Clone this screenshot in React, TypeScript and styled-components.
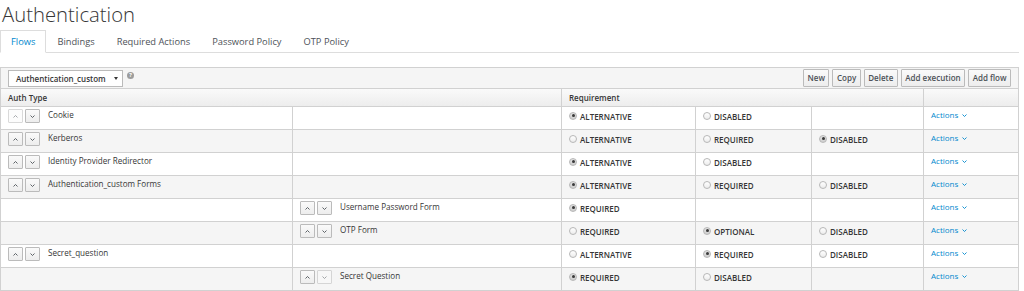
import React from "react";
import styled, { createGlobalStyle, css } from "styled-components";

const Global = createGlobalStyle`
  html, body { margin: 0; padding: 0; background: #fff; }
  body { font-family: "Open Sans", "Noto Sans", sans-serif; color: #363636; }
  * { box-sizing: border-box; }
`;

const Page = styled.div`
  width: 1019px;
`;

const Title = styled.h1`
  margin: 0;
  padding-left: 2px;
  font-size: 20.3px;
  font-weight: 300;
  line-height: 28px;
  color: #363636;
`;

const Tabs = styled.ul`
  display: flex;
  list-style: none;
  margin: 2px 0 0;
  padding: 0;
  border-bottom: 1px solid #ddd;
`;

const Tab = styled.li<{ $active?: boolean }>`
  height: 23px;
  margin-bottom: -1px;
  padding: 0 10px;
  font-size: 9.3px;
  line-height: 22px;
  color: #4d5258;
  border: 1px solid transparent;
  ${(p) =>
    p.$active &&
    css`
      color: #0088ce;
      border-color: #ddd;
      border-bottom-color: #fff;
      background: #fff;
    `}
`;

const Toolbar = styled.div`
  display: flex;
  align-items: flex-end;
  height: 22px;
  margin-top: 14px;
  padding: 0 7px 1px 7px;
  border: 1px solid #d1d1d1;
  background: #f5f5f5;
`;

const Select = styled.div`
  display: flex;
  align-items: center;
  justify-content: space-between;
  width: 115px;
  height: 17px;
  padding: 0 4px 0 7px;
  border: 1px solid #bbb;
  background: #fff;
  font-size: 8px;
  font-weight: 600;
  color: #363636;
`;

const Caret = styled.span`
  width: 0;
  height: 0;
  border-left: 2px solid transparent;
  border-right: 2px solid transparent;
  border-top: 3px solid #363636;
`;

const Help = styled.span`
  align-self: flex-start;
  margin: 4px 0 0 4px;
  width: 7px;
  height: 7px;
  border-radius: 50%;
  background: #9c9c9c;
  color: #fff;
  font-size: 5.5px;
  font-weight: 700;
  line-height: 7px;
  text-align: center;
`;

const ButtonGroup = styled.div`
  display: flex;
  gap: 3px;
  margin-left: auto;
`;

const ToolButton = styled.button`
  height: 18px;
  padding: 0 3.5px;
  border: 1px solid #bbb;
  border-radius: 1px;
  background: linear-gradient(#fafafa, #ededed);
  font-family: inherit;
  font-size: 8px;
  font-weight: 600;
  color: #4d5258;
  line-height: 16px;
`;

const Grid = styled.div`
  display: grid;
  grid-template-columns: 292px 269px 134px 116px 112px 95px;
  border-right: 1px solid #d1d1d1;
`;

const HeadRow = styled(Grid)`
  height: 18px;
  border-bottom: 1px solid #d1d1d1;
  background: linear-gradient(#fafafa, #ededed);
`;

const HeadCell = styled.div<{ $span: number }>`
  grid-column: span ${(p) => p.$span};
  display: flex;
  align-items: center;
  padding: 0 7px;
  border-left: 1px solid #d1d1d1;
  font-size: 8px;
  font-weight: 600;
  color: #363636;
`;

const BodyRow = styled(Grid)<{ $striped: boolean }>`
  height: 23px;
  border-bottom: 1px solid #d1d1d1;
  background: ${(p) => (p.$striped ? "#f5f5f5" : "#fff")};
`;

const Cell = styled.div`
  display: flex;
  align-items: flex-start;
  padding: 2px 7px 0;
  border-left: 1px solid #d1d1d1;
  min-width: 0;
`;

const MoveButtons = styled.div`
  display: flex;
  gap: 2px;
  margin-right: 8px;
`;

const MoveButton = styled.span<{ $disabled?: boolean }>`
  display: flex;
  align-items: center;
  justify-content: center;
  width: 15px;
  height: 14px;
  border: 1px solid #bbb;
  border-radius: 1px;
  background: linear-gradient(#fafafa, #ededed);
  color: #4d5258;
  ${(p) =>
    p.$disabled &&
    css`
      opacity: 0.55;
      background: #fafafa;
    `}
`;

const Name = styled.span`
  font-size: 8.1px;
  line-height: 12px;
  color: #363636;
  white-space: nowrap;
`;

const Option = styled.label`
  display: flex;
  align-items: center;
  gap: 3px;
  margin-top: 2px;
  font-size: 8px;
  font-weight: 600;
  line-height: 11px;
  color: #363636;
  white-space: nowrap;
`;

const Radio = styled.span<{ $checked?: boolean }>`
  position: relative;
  flex: none;
  width: 8px;
  height: 8px;
  margin-top: -2px;
  border-radius: 50%;
  border: 1px solid #b7b7b7;
  background: ${(p) => (p.$checked ? "linear-gradient(#e2e2e2, #cfcfcf)" : "linear-gradient(#fff, #ececec)")};
  ${(p) =>
    p.$checked &&
    css`
      &::after {
        content: "";
        position: absolute;
        left: 1.5px;
        top: 1.5px;
        width: 3px;
        height: 3px;
        border-radius: 50%;
        background: #3a3a3a;
      }
    `}
`;

const ActionsLink = styled.a`
  display: flex;
  align-items: center;
  gap: 4px;
  font-size: 8px;
  line-height: 12px;
  color: #0088ce;
  text-decoration: none;
`;

const Chevron = ({ up }: { up?: boolean }) => (
  <svg width="5" height="3" viewBox="0 0 5 3" style={up ? { transform: "rotate(180deg)" } : undefined}>
    <path d="M0.5 0.5 L2.5 2.5 L4.5 0.5" fill="none" stroke="currentColor" strokeWidth="0.9" />
  </svg>
);

type Opt = { label: string; checked?: boolean };
type Row = {
  name: string;
  nested?: boolean;
  upDisabled?: boolean;
  downDisabled?: boolean;
  options: Opt[];
};

const rows: Row[] = [
  { name: "Cookie", upDisabled: true, options: [{ label: "ALTERNATIVE", checked: true }, { label: "DISABLED" }] },
  {
    name: "Kerberos",
    options: [{ label: "ALTERNATIVE" }, { label: "REQUIRED" }, { label: "DISABLED", checked: true }],
  },
  {
    name: "Identity Provider Redirector",
    options: [{ label: "ALTERNATIVE", checked: true }, { label: "DISABLED" }],
  },
  {
    name: "Authentication_custom Forms",
    options: [{ label: "ALTERNATIVE", checked: true }, { label: "REQUIRED" }, { label: "DISABLED" }],
  },
  { name: "Username Password Form", nested: true, options: [{ label: "REQUIRED", checked: true }] },
  {
    name: "OTP Form",
    nested: true,
    options: [{ label: "REQUIRED" }, { label: "OPTIONAL", checked: true }, { label: "DISABLED" }],
  },
  {
    name: "Secret_question",
    options: [{ label: "ALTERNATIVE" }, { label: "REQUIRED", checked: true }, { label: "DISABLED" }],
  },
  {
    name: "Secret Question",
    nested: true,
    downDisabled: true,
    options: [{ label: "REQUIRED", checked: true }, { label: "DISABLED" }],
  },
];

const NameCell = ({ row }: { row: Row }) => (
  <Cell>
    <MoveButtons>
      <MoveButton $disabled={row.upDisabled}>
        <Chevron up />
      </MoveButton>
      <MoveButton $disabled={row.downDisabled}>
        <Chevron />
      </MoveButton>
    </MoveButtons>
    <Name>{row.name}</Name>
  </Cell>
);

export default function App() {
  return (
    <Page>
      <Global />
      <Title>Authentication</Title>
      <Tabs>
        <Tab $active>Flows</Tab>
        <Tab>Bindings</Tab>
        <Tab>Required Actions</Tab>
        <Tab>Password Policy</Tab>
        <Tab>OTP Policy</Tab>
      </Tabs>
      <Toolbar>
        <Select>
          <span>Authentication_custom</span>
          <Caret />
        </Select>
        <Help>?</Help>
        <ButtonGroup>
          <ToolButton>New</ToolButton>
          <ToolButton>Copy</ToolButton>
          <ToolButton>Delete</ToolButton>
          <ToolButton>Add execution</ToolButton>
          <ToolButton>Add flow</ToolButton>
        </ButtonGroup>
      </Toolbar>
      <HeadRow>
        <HeadCell $span={2}>Auth Type</HeadCell>
        <HeadCell $span={3}>Requirement</HeadCell>
        <HeadCell $span={1} />
      </HeadRow>
      {rows.map((row, i) => (
        <BodyRow key={row.name} $striped={i % 2 === 1}>
          {row.nested ? <Cell /> : <NameCell row={row} />}
          {row.nested ? <NameCell row={row} /> : <Cell />}
          {[0, 1, 2].map((k) => {
            const opt = row.options[k];
            return (
              <Cell key={k}>
                {opt && (
                  <Option>
                    <Radio $checked={opt.checked} />
                    {opt.label}
                  </Option>
                )}
              </Cell>
            );
          })}
          <Cell>
            <ActionsLink href="#">
              Actions
              <Chevron />
            </ActionsLink>
          </Cell>
        </BodyRow>
      ))}
    </Page>
  );
}
